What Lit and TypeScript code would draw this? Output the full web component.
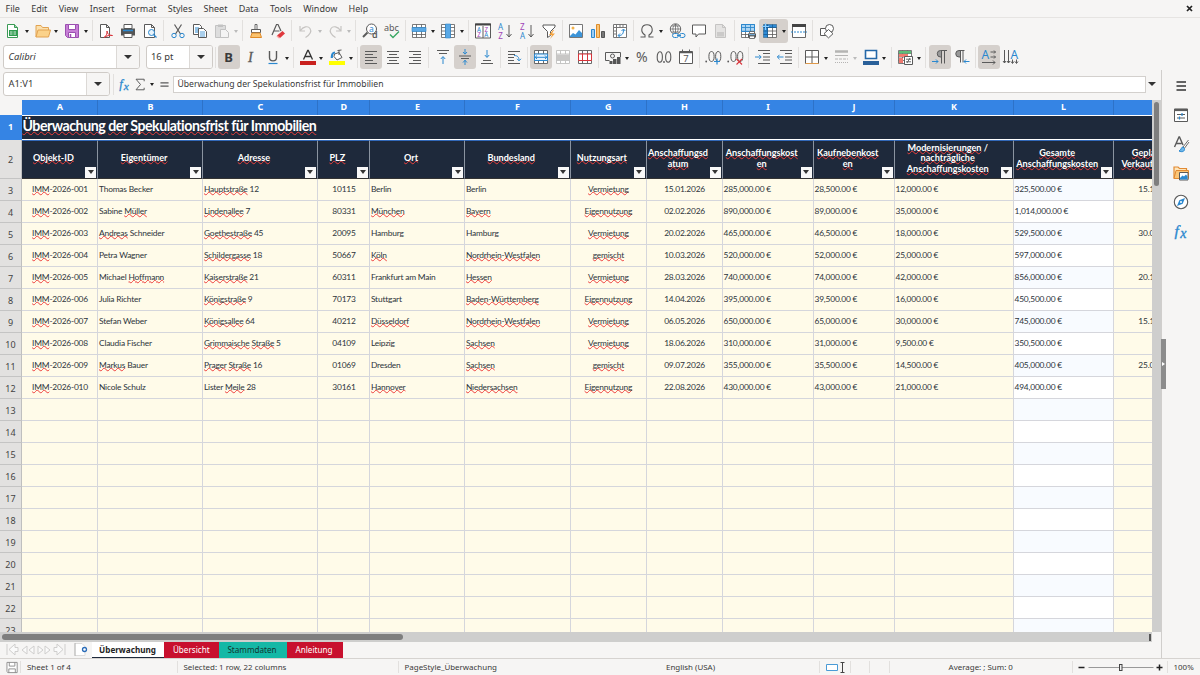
import { LitElement, html, css, svg, nothing } from 'lit';
import { customElement, property } from 'lit/decorators.js';
import { classMap } from 'lit/directives/class-map.js';

// All icons are drawn on a 16x16 grid.
const G = '#5a5a5a';
const B = '#2b88cf';

const lines = (rows: number[][], color = G) =>
  svg`<path d=${rows.map(([x, y, w]) => `M${x} ${y}h${w}`).join('')} stroke=${color} fill="none"/>`;

const letter = (
  x: number,
  y: number,
  text: string,
  color = G,
  size = 8,
  weight = 400,
) =>
  svg`<text x=${x} y=${y} font-size=${size} fill=${color} font-weight=${weight} font-family="Noto Sans, sans-serif">${text}</text>`;

const grid = (color = G) =>
  svg`<path d="M1.5 1.5h13v13h-13zM5.5 1.5v13M10.5 1.5v13M1.5 4.5h13M1.5 8h13M1.5 11.5h13" fill="#fff" stroke=${color} stroke-width=".8"/>`;
const mergeBase = (color: string) =>
  svg`<path d="M1.5 1.5h13v13h-13zM1.5 5h13M1.5 11.5h13M5.5 1.5v3.5M10.5 1.5v3.5M5.5 11.5v3M10.5 11.5v3" fill="#fff" stroke=${color} stroke-width=".9"/>`;
const fx = svg`<g font-style="italic" fill=${B} stroke=${B} stroke-width=".35" font-family="Liberation Serif, serif"><text x="1.5" y="12.5" font-size="15.5">f</text><text x="7.2" y="14.5" font-size="14">x</text></g>`;

const icons: Record<string, unknown> = {
  new: svg`<path d="M2.5 1.5h7l3 3v10h-10z" fill="#fff" stroke="#3a9a55"/><path d="M9.5 1.5v3h3" fill="#9fd8ae" stroke="#3a9a55"/><path d="M4 7h8v6H4z" fill="#2e9b4e"/><path d="M5 9h2.5M8.5 9H11M5 11h2.5M8.5 11H11" stroke="#fff" stroke-width=".8"/>`,
  open: svg`<path d="M1 14V2.5h5l1.5 2h6V7" fill="#fbe0ad" stroke="#e2a250"/><path d="M1 14l2-7h12.5l-2 7z" fill="#fbd28a" stroke="#e2a250"/>`,
  save: svg`<path d="M1.5 1.5h13v13h-11l-2-2z" fill="#c77fd6" stroke="#9b4fb0"/><path d="M4.5 1.5h7v5h-7zM4.5 9.5h7v5h-7z" fill="#fff" stroke="#9b4fb0"/><path d="M6.5 11v3" stroke="#9b4fb0" stroke-width="1.5"/>`,
  pdf: svg`<path d="M2.5 1.5h6l3 3v10h-9zM8.5 1.5v3h3" fill="#fff" stroke=${G}/><path d="M6 14.5c2-1 3.5-4 3-6.5c0 3 2.5 4.5 5.5 4.5c-3-.5-6 .3-8.500 2z" fill="none" stroke="#d9343b"/>`,
  print: svg`<path d="M4 1.5h8v4H4z" fill="#fff" stroke=${G}/><path d="M1 5.5h14v7H1z" fill="#555"/><path d="M3 7.5h10" stroke=${B} stroke-width="1.5"/><path d="M4 10.5h8v4H4z" fill="#fff" stroke=${G}/>`,
  preview: svg`<path d="M2.5 1.5h7l3 3v10h-10zM9.5 1.5v3h3" fill="#fff" stroke=${G}/><circle cx="9.5" cy="9.5" r="3" fill="#e8f3fb" stroke=${B}/><path d="M11.5 11.5l3 3" stroke=${B} stroke-width="1.3"/>`,
  cut: svg`<path d="M4.5 1.5L10.5 11M11.5 1.5L5.5 11" stroke=${G} stroke-width="1.2"/><circle cx="4" cy="12.5" r="2.2" fill="none" stroke=${B}/><circle cx="12" cy="12.5" r="2.2" fill="none" stroke=${B}/>`,
  copy: svg`<path d="M1.5 1.5h6l2 2v8h-8z" fill="#fff" stroke=${G}/><path d="M3 5h4M3 7h3M3 9h3" stroke=${B}/><path d="M6.5 5.5h5l3 3v6h-8z" fill="#fff" stroke=${G}/><path d="M8 9h5M8 11h5M8 13h5" stroke=${B} stroke-width=".8"/>`,
  paste: svg`<path d="M1.5 2.5h10v12h-10z" fill="#ddd" stroke="#c2c2c2"/><path d="M4 1.5h5V4H4z" fill="#c2c2c2"/><path d="M6.5 6.5h5l3 3v5h-8z" fill="#f4f4f4" stroke="#c2c2c2"/>`,
  brush: svg`<path d="M7 1.5h2v5H7z" fill="#fff" stroke=${G} stroke-width=".9"/><path d="M3.5 6.5h9v3h-9z" fill="#fff" stroke=${G}/><path d="M4 10h8l1.5 4.5h-11z" fill="#fbc36f" stroke="#e08a28"/>`,
  clear: svg`<path d="M2 12L6.5 1.5H8L11 8M4 8h5.5" fill="none" stroke=${G} stroke-width="1.2"/><path d="M7 12.5l5.5-4.5 2.5 2.5-5 4.5z" fill="#e0393e"/><path d="M7 12.5l3 2.5-1 .5-2.5-2z" fill="#ff9b9b"/>`,
  undo: svg`<path d="M2 3v5h5M2.5 7.5C5 3.5 10 2.5 12 5.5s0 6-4.5 9" fill="none" stroke="#c6c4c2" stroke-width="1.2"/>`,
  redo: svg`<path d="M14 3v5H9M13.5 7.5C11 3.5 6 2.5 4 5.5s0 6 4.5 9" fill="none" stroke="#c6c4c2" stroke-width="1.2"/>`,
  find: svg`<circle cx="9.5" cy="6" r="5" fill="#fff" stroke=${G}/><path d="M5.5 9.5L1 14" stroke=${G} stroke-width="2"/>${letter(7, 8.5, 'a', B, 8.5)}${letter(10, 15, 'd', G, 9, 600)}`,
  spell: svg`${letter(0, 7.5, 'abc', G, 9)}<path d="M6 11.5l3 3 6-6" fill="none" stroke="#3aa864" stroke-width="1.4"/>`,
  row: svg`${grid()}<path d="M1 4.5h14v4H1z" fill="#5aa9e6" stroke=${B} stroke-width=".6"/>`,
  col: svg`${grid()}<path d="M5.5 1h5v14h-5z" fill="#5aa9e6" stroke=${B} stroke-width=".6"/>`,
  sort: svg`<path d="M.5 1h15v14H.5zM8 3v12" fill="#fff" stroke=${G}/><path d="M0 1.5h16" stroke="#444" stroke-width="2"/>${letter(2, 8.5, 'A', B, 6.2)}${letter(9.5, 8.5, 'Z', '#a144b8', 6.2)}${letter(2.2, 14.3, 'Z', '#a144b8', 6.2)}${letter(9.3, 14.3, 'A', B, 6.2)}`,
  az: svg`${letter(1, 7, 'A', B, 8)}${letter(1.2, 15.5, 'Z', '#a144b8', 8)}<path d="M12 2v12M9.5 11l2.5 3 2.5-3" fill="none" stroke=${G}/>`,
  za: svg`${letter(1, 7, 'Z', '#a144b8', 8)}${letter(1, 15.5, 'A', B, 8)}<path d="M12 2v12M9.5 11l2.5 3 2.5-3" fill="none" stroke=${G}/>`,
  filter: svg`<path d="M2 2h12v2L9.5 8.5v4l-3 2v-6L2 4z" fill="#fff" stroke=${G}/><path d="M12 7l-4 5h3l-2 4 5-5.5h-3l2-3.5z" fill="#f3a13c"/>`,
  image: svg`<path d="M1.5 1.5h13v13h-13z" fill="#fff" stroke="#777"/><circle cx="5" cy="5" r="1.5" fill="#f2b24a"/><path d="M2 13l3-3 2.5 1.5L11 7l3 3v4H2z" fill="#3c94d8"/>`,
  chart: svg`<path d="M1.5 6.5h3v8h-3z" fill="#9ecdf2" stroke=${B}/><path d="M6.5 1.5h3v13h-3z" fill="#fbc577" stroke="#dd8d2b"/><path d="M11.5 8.5h3v6h-3z" fill="#777" stroke="#555"/>`,
  pivot: svg`<path d="M1.5 1.5h13v13h-13zM1.5 4.5h13M4.5 1.5v13M8 1.5v3M11 1.5v3M1.5 8h3M1.5 11h3" fill="#fff" stroke="#777"/><path d="M6.5 12.5c4 0 5-2 5-6M6 12.5l2-2M6 12.5l2 1.8M11.5 6l-2 2M11.5 6l1.8 2" fill="none" stroke=${B}/>`,
  omega: svg`<path d="M1.5 14h4.5v-2C1 9 2 1.8 8 1.8S15 9 10 12v2h4.5" fill="none" stroke=${G} stroke-width="1.1"/>`,
  link: svg`<circle cx="6.5" cy="6" r="5.2" fill="#fff" stroke=${G} stroke-width=".9"/><path d="M1.5 6h10.5M6.5 1v10M2.5 3h8M2.5 9h8M6.5 1c-3.5 3-3.5 7 0 10c3.5-3 3.5-7 0-10" fill="none" stroke=${G} stroke-width=".7"/><rect x="3.5" y="10.5" width="6" height="4" rx="2" fill="#f5f4f2" stroke=${B}/><rect x="10.5" y="10.5" width="5.5" height="4" rx="2" fill="#f5f4f2" stroke=${B}/><path d="M8 12.5h4" stroke=${B}/>`,
  comment: svg`<path d="M1.5 2h13v9H7.5L5 14v-3H1.5z" fill="#fff" stroke=${G}/>`,
  header: svg`<path d="M2.5 1.5h7l3 3v10h-10z" fill="#e4e3e2" stroke="#c5c4c3"/><path d="M4 9h7v4.5H4z" fill="#cbcac9"/><path d="M9.5 1.5v3h3" fill="none" stroke="#c5c4c3"/>`,
  range: svg`${grid()}<path d="M1.5 1.5h13v7h-13z" fill="#8ac4f0" fill-opacity=".7" stroke=${B}/><path d="M1.5 4.5h13M5.5 1.5v7M10.5 1.5v7" stroke=${B} stroke-width=".8"/><path d="M8 10.5h8v4H8z" fill="#555"/><path d="M9.5 8.5h5v2h-5zM9.5 13h5v2.5h-5z" fill="#fff" stroke="#555" stroke-width=".8"/><path d="M9 11.7h6" stroke="#79bdf0"/>`,
  freeze: svg`${grid()}<path d="M1.5 1.5h13v3h-9v10h-4z" fill="#2e8bd6"/><path d="M1.5 4.5h13M1.5 8h4M1.5 11.5h4M5.5 1.5v13M10.5 1.5v3" stroke="#165a94" stroke-width=".8"/><path d="M3.5 0v7M0 3.5h7" stroke="#8fd0ff"/>`,
  split: svg`<path d="M1.5 1.5h13v13h-13z" fill="#fff" stroke="#666"/><path d="M1 2.5h14" stroke="#444" stroke-width="3"/><path d="M0 9h16" stroke=${B} stroke-dasharray="2 1"/>`,
  shapes: svg`<path d="M1.5 5.5h7v7h-7z" fill="#fff" stroke=${G}/><circle cx="10.5" cy="5.5" r="4" fill="#fff" stroke=${G}/><path d="M9.5 6.5l4.5 4.2-4.5 4.2L5 10.7z" fill="#fff" stroke=${G}/>`,
  bold: letter(3.2, 13, 'B', '#3a3a3a', 13, 700),
  italic: svg`<text x="5" y="13" font-size="14.5" font-style="italic" fill=${G} stroke=${G} stroke-width=".3" font-family="Liberation Serif, serif">I</text>`,
  underline: svg`<path d="M4.5 2v6.5c0 4.5 7 4.5 7 0V2" fill="none" stroke=${G} stroke-width="1.4"/><path d="M3.5 14.5h9" stroke=${B} stroke-width="1.2"/>`,
  color: svg`<path d="M3.5 10.5L7.7 1.5h.6L12.5 10.5M5 7.5h6" fill="none" stroke="#333" stroke-width="1.3"/><path d="M0 12h16v4H0z" fill="#c9211e"/>`,
  fill: svg`<path d="M5.5 5l4.5-1.5 3 5-5 2.5-3-3.5z" fill="#fff" stroke=${G}/><path d="M10 1v5M8.5 1.5l4-.5" stroke=${G}/><path d="M6 3.5C2.5 4 3 6 2.8 9" stroke=${B} stroke-width="2.2" fill="none"/><path d="M0 12h16v4H0z" fill="#ff0"/>`,
  left: lines([[2, 2.5, 12], [2, 5.5, 8], [2, 8.5, 12], [2, 11.5, 8], [2, 14.5, 12]]),
  center: lines([[2, 2.5, 12], [4, 5.5, 8], [2, 8.5, 12], [4, 11.5, 8], [2, 14.5, 12]]),
  right: lines([[2, 2.5, 12], [6, 5.5, 8], [2, 8.5, 12], [6, 11.5, 8], [2, 14.5, 12]]),
  top: svg`${lines([[2, 1.5, 12], [4, 4.5, 8]])}<path d="M8 15V8M5.8 10L8 7.5 10.2 10" fill="none" stroke=${B}/>`,
  middle: svg`${lines([[2, 7, 12], [4, 9.5, 8]])}<path d="M8 0v5M6 3l2 2.2L10 3M8 16v-5M6 13.5l2-2.2 2 2.2" fill="none" stroke=${B}/>`,
  bottom: svg`${lines([[4, 11.5, 8], [2, 14.5, 12]])}<path d="M8 1v7M5.8 6L8 8.5 10.2 6" fill="none" stroke=${B}/>`,
  wrap: svg`${lines([[2, 2.5, 12], [2, 5.5, 7], [2, 8.5, 6], [2, 11.5, 6], [2, 14.5, 12]])}<path d="M8 6.5c4 0 5 2 5 5M11 9.8l2 2 2-2" fill="none" stroke=${B}/>`,
  mergeCenter: svg`${mergeBase(G)}<path d="M1.5 5h13v6.5h-13z" fill="#e5f3ff" stroke=${B}/><path d="M2 8.3h12M4 6.5L2.2 8.3 4 10M12 6.5l1.8 1.8L12 10" fill="none" stroke=${B}/>`,
  merge: svg`${mergeBase('#c0bfbe')}<path d="M2 5.5h12v5.5H2z" fill="#c8c7c6"/>`,
  unmerge: svg`${mergeBase(G)}<path d="M1.5 5h13v6.5h-13zM5.5 5v6.5M10.5 5v6.5" fill="#fff" stroke="#d9343b"/>`,
  currency: svg`<path d="M.5 3.5v8h4M.5 3.5h15V8" fill="none" stroke=${G}/><circle cx="7.5" cy="7" r="2" fill="none" stroke=${G}/><path d="M4.5 12h3v3h-3zM8 10h3.5v5H8zM12 8h3.5v7H12z" fill="#555"/>`,
  percent: letter(2, 13, '%', G, 14),
  number: svg`<ellipse cx="3.8" cy="8" rx="2.6" ry="5.2" fill="none" stroke=${G} stroke-width="1.1"/><circle cx="8" cy="13" r=".9" fill=${G}/><ellipse cx="12.2" cy="8" rx="2.6" ry="5.2" fill="none" stroke=${G} stroke-width="1.1"/>`,
  date: svg`<path d="M1.5 2.5h13v12h-13z" fill="#fff" stroke=${G}/><path d="M1.5 3.5h13" stroke=${G} stroke-width="1.5"/><path d="M4.5 .5v3M11.5 .5v3" stroke=${G}/>${letter(5.2, 13, '7', G, 9.5)}`,
  decAdd: svg`<circle cx="1.2" cy="12.5" r=".9" fill=${G}/><path d="M6.5 7.5m-2.6 0a2.6 5 0 1 0 5.2 0a2.6 5 0 1 0-5.2 0M13.2 7.5m-2.6 0a2.6 5 0 1 0 5.2 0a2.6 5 0 1 0-5.2 0" fill="none" stroke=${G}/><path d="M12 9.5v6M9 12.5h6" stroke=${B} stroke-width="1.2"/>`,
  decDel: svg`<circle cx="1.2" cy="12.5" r=".9" fill=${G}/><path d="M6.5 7.5m-2.6 0a2.6 5 0 1 0 5.2 0a2.6 5 0 1 0-5.2 0M13.2 7.5m-2.6 0a2.6 5 0 1 0 5.2 0a2.6 5 0 1 0-5.2 0" fill="none" stroke=${G}/><path d="M9.5 10l5.5 5.5M15 10l-5.5 5.5" stroke="#d9343b" stroke-width="1.1"/>`,
  indent: svg`${lines([[3, 1.5, 12], [8, 4.5, 7], [8, 8, 7], [8, 11, 7], [3, 14.5, 12]])}<path d="M0 8h6M4 5.8L6.2 8 4 10.2" fill="none" stroke=${B}/>`,
  outdent: svg`${lines([[3, 1.5, 12], [8, 4.5, 7], [8, 8, 7], [8, 11, 7], [3, 14.5, 12]])}<path d="M.5 8h6M2.5 5.8L.3 8l2.2 2.2" fill="none" stroke=${B}/>`,
  border: svg`<path d="M1.5 1.5h13v13h-13zM8 1.5v13M1.5 8h13" fill="#fff" stroke=${G}/><path d="M1.5 14.5h13" stroke="#e09a4a"/>`,
  style: svg`<path d="M2 2.5h13" stroke="#b5b4b3" stroke-width="2.5"/><path d="M2 6.5h13" stroke="#b5b4b3"/><path d="M2 10h13" stroke="#b5b4b3" stroke-dasharray="3 1"/><path d="M2 13.5h13" stroke="#b5b4b3" stroke-dasharray="1 1"/>`,
  borderColor: svg`<path d="M2.5 1.5h11v8h-11z" fill="#fff" stroke="#2568a8" stroke-width="1.6"/><path d="M0 12h16v4H0z" fill="#2a6099"/>`,
  cond: svg`${grid()}<path d="M2 2h12v2.5H2z" fill="#5cbf78"/><path d="M2 5h9v3H2zM2 9h4v5H2z" fill="#ef7a70"/><path d="M7.5 7.5h8v8h-8z" fill="#fff" stroke=${G}/><path d="M9 10.2h5M9 12.8h5M13 9l-3 5" stroke=${G} stroke-width=".9"/>`,
  ltr: svg`<path d="M9.5 1.5H8.5a3 3 0 0 0 0 6.5h1z" fill="#999"/><path d="M15 1.5H8.5a3 3 0 0 0 0 6.5H9M9.5 1.5v13M12.5 1.5v13" fill="none" stroke=${G}/><path d="M0 12.5h6M4 10.5l2 2-2 2" fill="none" stroke=${B}/>`,
  rtl: svg`<path d="M6.5 1.5H5a3 3 0 0 0 0 6.5h1.5z" fill="#999"/><path d="M10.5 1.5H5a3 3 0 0 0 0 6.5h1M6.5 1.5v12M9 1.5v12" fill="none" stroke=${G}/><path d="M15.5 12.5H10M12 10.5l-2 2 2 2" fill="none" stroke=${B}/>`,
  horizontal: svg`${letter(0.5, 10, 'A', B, 12)}<path d="M9.5 3h5M13 1.5L14.5 3 13 4.5M9.5 8h5M13 6.5L14.5 8 13 9.5M1 13.5h13M12 11.5l2 2-2 2" fill="none" stroke=${G}/>`,
  vertical: svg`${letter(7.5, 10, 'A', B, 12)}<path d="M1.5 1v13M0 12l1.5 2L3 12M5.5 1v13M4 12l1.5 2L7 12M9.5 10.5V14M8 12.5L9.5 14.5 11 12.5M13.5 10.5V14M12 12.5l1.5 2 1.5-2" fill="none" stroke=${G}/>`,
  fx,
  sigma: svg`<path d="M12.5 4V1.5h-10L8 8l-5.5 6.5h10V12" fill="none" stroke=${G} stroke-width="1.2"/>`,
  equals: svg`<path d="M3 6h10M3 10h10" stroke=${G} stroke-width="1.6"/>`,
  menu: svg`<path d="M3.5 4h9.5M3.5 8h9.5M3.5 12h9.5" stroke="#333" stroke-width="1.4"/>`,
  properties: svg`<path d="M1.5 2h13v12.5h-13z" fill="#fff" stroke=${G}/><path d="M1 3h14" stroke=${G} stroke-width="2.2"/><path d="M4 7.5h8M4 11h8" stroke=${G}/><path d="M9 6v3M6.5 9.5v3" stroke=${B} stroke-width="1.2"/>`,
  styles: svg`<path d="M1.5 11L6 1h.5L10 9M3 7.5h5.5" fill="none" stroke=${G} stroke-width="1.4"/><path d="M15.5 4L10 11l1.5 1.2L16 6" fill="#fff" stroke=${G} stroke-width=".9"/><path d="M10 11c-2 0-1.5 3-4 4 3 1.5 6 .5 5.5-2.5z" fill="#6db7ea" stroke=${B}/>`,
  gallery: svg`<path d="M1 13.5V2h4l1.5 1.5h7V6H4z" fill="#fde5bb" stroke="#e28a32" stroke-width="1.2"/><path d="M1 13.5L3 5.5h12.5v8z" fill="#fbc577" stroke="#e28a32"/><path d="M6.5 7.5h8.5v7.5H6.5z" fill="#fff" stroke=${G}/><path d="M7 13l2.5-2.5 1.5 1L13 9.5l1.5 2v3H7z" fill=${B}/>`,
  navigator: svg`<circle cx="8" cy="8" r="6.7" fill="#fff" stroke=${G} stroke-width="1.1"/><path d="M12 4l-2.3 5.7L4 12l2.3-5.7z" fill=${B}/><circle cx="8" cy="8" r="1" fill="#fff"/>`,
  diskSmall: svg`<path d="M2.5 2.5h11v11h-10l-1-1z" fill="#fff" stroke="#8c8c8c"/><path d="M5 2.5v4h6v-4M4.5 13.5v-4h7v4" fill="none" stroke="#8c8c8c"/>`,
};

const icon = (name: string) =>
  html`<svg class="icon" viewBox="0 0 16 16">${icons[name]}</svg>`;

// '|' separates groups, 'v' adds a dropdown, '!' marks a pressed button,
// '-' a disabled dropdown
const STANDARD =
  'new:v open:v save:v | pdf print preview | cut copy paste:- | brush clear | undo:- redo:- | find spell | row:v col:v | sort az za filter | image chart pivot | omega:v link comment header | range freeze:v! split | shapes';
const FORMATTING =
  'bold:! italic underline:v | color:v fill:v | left:! center right | top middle:! bottom | wrap | mergeCenter:! merge unmerge | currency:v percent number date | decAdd decDel | indent outdent | border:v style:- borderColor:v | cond:v | ltr:! rtl | horizontal:! vertical';

const MENU = ['File', 'Edit', 'View', 'Insert', 'Format', 'Styles', 'Sheet', 'Data', 'Tools', 'Window', 'Help'];
const COLUMNS = ['A', 'B', 'C', 'D', 'E', 'F', 'G', 'H', 'I', 'J', 'K', 'L', ''];

// Words between underscores are flagged by the spell checker.
const HEADERS = [
  ['_Objekt-ID_'],
  ['_Eigentümer_'],
  ['_Adresse_'],
  ['_PLZ_'],
  ['_Ort_'],
  ['_Bundesland_'],
  ['_Nutzungsart_'],
  ['_Anschaffungsd_', '_atum_'],
  ['_Anschaffungskost_', '_en_'],
  ['_Kaufnebenkost_', '_en_'],
  ['_Modernisierungen_ /', '_nachträgliche_', '_Anschaffungskosten_'],
  ['_Gesamte_', '_Anschaffungskosten_'],
  ['_Geplantes_', '_Verkaufsdatum_'],
];

const ROWS = [
  ['Thomas Becker', '_Hauptstraße_ 12', '10115', 'Berlin', 'Berlin', '_Vermietung_', '15.01.2026', '285,000.00 €', '28,500.00 €', '12,000.00 €', '325,500.00 €', '15.12.2026'],
  ['Sabine _Müller_', '_Lindenallee_ 7', '80331', '_München_', '_Bayern_', '_Eigennutzung_', '02.02.2026', '890,000.00 €', '89,000.00 €', '35,000.00 €', '1,014,000.00 €', ''],
  ['_Andreas_ Schneider', '_Goethestraße_ 45', '20095', 'Hamburg', 'Hamburg', '_Vermietung_', '20.02.2026', '465,000.00 €', '46,500.00 €', '18,000.00 €', '529,500.00 €', '30.06.2027'],
  ['Petra Wagner', '_Schildergasse_ 18', '50667', '_Köln_', '_Nordrhein-Westfalen_', '_gemischt_', '10.03.2026', '520,000.00 €', '52,000.00 €', '25,000.00 €', '597,000.00 €', ''],
  ['Michael _Hoffmann_', '_Kaiserstraße_ 21', '60311', 'Frankfurt am Main', '_Hessen_', '_Vermietung_', '28.03.2026', '740,000.00 €', '74,000.00 €', '42,000.00 €', '856,000.00 €', '20.11.2027'],
  ['Julia Richter', '_Königstraße_ 9', '70173', 'Stuttgart', '_Baden-Württemberg_', '_Eigennutzung_', '14.04.2026', '395,000.00 €', '39,500.00 €', '16,000.00 €', '450,500.00 €', ''],
  ['Stefan Weber', '_Königsallee_ 64', '40212', '_Düsseldorf_', '_Nordrhein-Westfalen_', '_Vermietung_', '06.05.2026', '650,000.00 €', '65,000.00 €', '30,000.00 €', '745,000.00 €', '15.10.2028'],
  ['Claudia Fischer', '_Grimmaische_ _Straße_ 5', '04109', 'Leipzig', '_Sachsen_', '_Vermietung_', '18.06.2026', '310,000.00 €', '31,000.00 €', '9,500.00 €', '350,500.00 €', ''],
  ['_Markus_ Bauer', '_Prager_ _Straße_ 16', '01069', 'Dresden', '_Sachsen_', '_gemischt_', '09.07.2026', '355,000.00 €', '35,500.00 €', '14,500.00 €', '405,000.00 €', '25.09.2028'],
  ['Nicole Schulz', 'Lister _Meile_ 28', '30161', '_Hannover_', '_Niedersachsen_', '_Eigennutzung_', '22.08.2026', '430,000.00 €', '43,000.00 €', '21,000.00 €', '494,000.00 €', ''],
];

const CENTERED = new Set([0, 3, 6, 7, 12]);

const marked = (text: string) =>
  text
    .split('_')
    .map((part, i) => (i % 2 ? html`<span class="typo">${part}</span>` : part));

@customElement('tool-bar')
export class ToolBar extends LitElement {
  @property() items = '';

  static styles = css`
    :host {
      display: flex;
      align-items: center;
      height: 26px;
    }
    .button {
      display: flex;
      align-items: center;
      height: 24px;
      border-radius: 3px;
    }
    .button.pressed {
      background: #d5d0cc;
    }
    .glyph {
      width: 22px;
      display: flex;
      justify-content: center;
    }
    .icon {
      width: 16px;
      height: 16px;
      overflow: visible;
    }
    .arrow {
      width: 7.25px;
      display: flex;
    }
    .arrow::after {
      content: '';
      margin: 2px 0 0 0.8px;
      border: 2.5px solid transparent;
      border-top: 3px solid #222;
      border-bottom: 0;
    }
    .arrow.off::after {
      border-top-color: #bbb;
    }
    .sep {
      width: 1px;
      height: 21px;
      margin: 0 2.35px 0 2px;
      background: #e2e0de;
    }
  `;

  render() {
    return this.items.split(' ').map((item) => {
      if (item === '|') {
        return html`<div class="sep"></div>`;
      }
      const [name, flags = ''] = item.split(':');
      return html`
        <div class=${classMap({ button: true, pressed: flags.includes('!') })}>
          <div class="glyph">${icon(name)}</div>
          ${/[v-]/.test(flags)
            ? html`<div
                class=${classMap({ arrow: true, off: flags.includes('-') })}
              ></div>`
            : nothing}
        </div>
      `;
    });
  }
}

@customElement('sheet-grid')
export class SheetGrid extends LitElement {
  static styles = css`
    :host {
      display: block;
      height: 532px;
      overflow: hidden;
      font-family: Lato, 'Liberation Sans', sans-serif;
      font-size: 8.4px;
      letter-spacing: -0.2px;
      color: #2c333b;
    }
    .typo {
      text-decoration: underline wavy #ee3f3c;
      text-decoration-thickness: 0.6px;
      text-underline-offset: -0.5px;
      text-decoration-skip-ink: none;
    }
    .row {
      display: grid;
      grid-template-columns:
        22px 76.4px 105px 114.6px 52.4px 95px 105.2px 76px
        76.4px 91px 81px 119px 100px 90px;
      height: 22.05px;
    }
    .row > div {
      box-sizing: border-box;
      overflow: hidden;
      white-space: nowrap;
    }
    .num {
      display: flex;
      align-items: center;
      justify-content: center;
      padding-top: 2px;
      background: #e2e1e0;
      border-right: 1px solid #bfbfbf;
      border-bottom: 1px solid #c4c4c4;
      font-family: 'Noto Sans', sans-serif;
      font-size: 9px;
      letter-spacing: 0;
      color: #444;
    }
    .cell {
      display: flex;
      align-items: center;
      padding: 0 0 0 0.6px;
      background: #fffbe9;
      border-right: 1px solid #d5d6dc;
      border-bottom: 1px solid #d5d6dc;
    }
    .center {
      justify-content: center;
    }
    .total {
      background: #fff;
    }
    .odd .total {
      background: #f8fbff;
    }
    .letters {
      height: 14.5px;
    }
    .letters .letter {
      background: #3584e4;
      border-right: 1px solid #2d72c8;
      color: #fff;
      font: 700 9px/14px 'Noto Sans', sans-serif;
      text-align: center;
    }
    .title {
      height: 25px;
      grid-template-columns: 22px 1fr;
    }
    .title .num {
      padding-top: 0;
      background: #3584e4;
      color: #fff;
      font-weight: 700;
      border-color: #3584e4;
    }
    .title .text {
      border-top: 1px solid #fff;
      border-bottom: 1.5px solid #fff;
      background: #1e293b;
      color: #fff;
      font-size: 14.2px;
      letter-spacing: -0.49px;
      line-height: 20px;
      font-weight: 700;
      padding-left: 0.4px;
    }
    .title .typo {
      text-underline-offset: 0.4px;
      text-decoration-thickness: 0.8px;
    }
    .head {
      height: 39px;
    }
    .head .label {
      display: flex;
      align-items: center;
      background: #1e293b;
      color: #fff;
      border-top: 1.5px solid #3268b8;
      border-right: 1px solid #8a93a0;
      border-bottom: 1.5px solid #333;
      font-weight: 700;
      font-size: 9.1px;
      letter-spacing: 0;
      line-height: 10.4px;
      text-align: center;
    }
    .head .words {
      flex: 1;
      margin-left: -8px;
      margin-right: -7.5px;
      padding-bottom: 1px;
    }
    .drop {
      width: 11px;
      height: 11px;
      margin-right: 1px;
      align-self: flex-end;
      flex: none;
      display: flex;
      align-items: center;
      justify-content: center;
      background: #f8f8f8;
    }
    .drop::after {
      content: '';
      border: 3px solid transparent;
      border-top: 4px solid #333;
      border-bottom: 0;
    }
  `;

  render() {
    const rows = Array.from({ length: 21 }, (_, i) => i);
    return html`
      <div class="row letters">
        <div></div>
        ${COLUMNS.map((c) => html`<div class="letter">${c}</div>`)}
      </div>
      <div class="row title">
        <div class="num">1</div>
        <div class="text">
          ${marked('_Überwachung_ _der_ _Spekulationsfrist_ _für_ _Immobilien_')}
        </div>
      </div>
      <div class="row head">
        <div class="num">2</div>
        ${HEADERS.map(
          (label) => html`
            <div class="label">
              <div class="words">
                ${label.map((line) => html`<div>${marked(line)}</div>`)}
              </div>
              <div class="drop"></div>
            </div>
          `,
        )}
      </div>
      ${rows.map((i) => this.renderRow(i))}
    `;
  }

  renderRow(i: number) {
    const id = `_IMM_-2026-${String(i + 1).padStart(3, '0')}`;
    const values = ROWS[i] ? [id, ...ROWS[i]] : Array(13).fill('');
    return html`
      <div class=${classMap({ row: true, odd: i % 2 === 0 })}>
        <div class="num">${i + 3}</div>
        ${values.map(
          (value, c) => html`
            <div
              class=${classMap({
                cell: true,
                center: CENTERED.has(c),
                total: c === 11,
              })}
            >
              <div>${marked(value)}</div>
            </div>
          `,
        )}
      </div>
    `;
  }
}

@customElement('app-root')
export class AppRoot extends LitElement {
  static styles = css`
    :host {
      display: flex;
      flex-direction: column;
      width: 1200px;
      height: 675px;
      overflow: hidden;
      background: #f6f5f4;
      color: #3a3a3a;
      font-family: 'Noto Sans', sans-serif;
      font-size: 9px;
    }
    .icon {
      width: 16px;
      height: 16px;
      overflow: visible;
    }
    .menu {
      display: flex;
      gap: 11.3px;
      align-items: center;
      height: 17px;
      padding: 0 7px 0 5.5px;
      border-bottom: 1px solid #e6e4e2;
    }
    .close {
      margin-left: auto;
      width: 7px;
      height: 7px;
    }
    .standard {
      padding-left: 2.4px;
      height: 25px;
      padding-bottom: 1px;
    }
    .formatting {
      display: flex;
      align-items: center;
      height: 26px;
      padding-left: 3px;
    }
    .combo {
      display: flex;
      box-sizing: border-box;
      height: 24px;
      border: 1px solid #cfcbc7;
      border-radius: 3px;
      background: #fff;
      overflow: hidden;
    }
    .combo span {
      flex: 1;
      line-height: 21px;
      padding-left: 4.5px;
      font-size: 9.4px;
    }
    .combo i {
      width: 22px;
      background: #f6f5f4;
      border-left: 1px solid #dcd9d6;
      display: flex;
      align-items: center;
      justify-content: center;
    }
    .combo i::after,
    .expand {
      content: '';
      border: 4px solid transparent;
      border-top: 4.5px solid #333;
      border-bottom: 0;
    }
    .font {
      width: 137px;
      margin-right: 5.5px;
      font-style: italic;
    }
    .size {
      width: 67.5px;
      margin-right: 2px;
    }
    .sep {
      width: 1px;
      height: 21px;
      background: #e2e0de;
      margin-right: 2px;
    }
    .body {
      display: flex;
      flex: 1;
      min-height: 0;
    }
    .main {
      width: 1161px;
      display: flex;
      flex-direction: column;
    }
    .formula {
      display: flex;
      align-items: center;
      height: 30px;
      box-sizing: border-box;
      padding: 0 0 2px 3px;
    }
    .name {
      width: 107px;
      margin-right: 3px;
    }
    .formula .small {
      width: 13px;
      height: 13px;
      margin: 0 1.5px;
    }
    .tiny {
      border: 2.5px solid transparent;
      border-top: 3px solid #222;
      border-bottom: 0;
      margin: 0 3px 0 1.5px;
    }
    .input {
      width: 972.5px;
      box-sizing: border-box;
      height: 17px;
      background: #fff;
      border: 1px solid #d3d0cd;
      padding-left: 3.5px;
      line-height: 15px;
      font-size: 8.65px;
      margin-left: 0.5px;
    }
    .expand {
      margin-left: 2px;
    }
    .sheet {
      display: flex;
    }
    sheet-grid {
      width: 1152px;
    }
    .vscroll {
      width: 9px;
      background: #cececd;
    }
    .vscroll div {
      width: 5.5px;
      height: 84px;
      margin: 2px 0 0 1.5px;
      border-radius: 3px;
      background: #7e7e7e;
    }
    .hscroll {
      display: flex;
      align-items: center;
      justify-content: space-between;
      width: 1152px;
      height: 10px;
      background: #cececd;
    }
    .hscroll div {
      width: 401px;
      height: 6px;
      margin-left: 2px;
      border-radius: 3px;
      background: #7e7e7e;
    }
    .hscroll b {
      width: 2px;
      height: 7px;
      margin-right: 1px;
      background: #555;
    }
    .tabs {
      display: flex;
      height: 15.5px;
      font-size: 8.15px;
      line-height: 15px;
      text-align: center;
    }
    .nav {
      width: 75px;
      padding-right: 17px;
      height: 15px;
    }
    .add {
      width: 10px;
      height: 13px;
      margin: 1px 7px 0 -17px;
      overflow: visible;
    }
    .tab {
      box-sizing: border-box;
      background: #c8102e;
      color: #fff;
    }
    .tab.active {
      width: 72px;
      background: #fff;
      color: #222;
      font-weight: 700;
      font-size: 8.15px;
      padding-right: 1px;
      border-bottom: 1.5px solid #1e293b;
    }
    .tab.red {
      width: 54.5px;
    }
    .tab.red:last-child {
      width: 56px;
      padding-right: 1px;
    }
    .tab.teal {
      width: 68px;
      padding-right: 1px;
      background: #14b8a6;
      color: #12352f;
    }
    .side {
      flex: 1;
      display: flex;
      border-left: 1px solid #d0cecc;
    }
    .handle {
      align-self: flex-start;
      width: 4.5px;
      height: 50px;
      margin-top: 269px;
      margin-left: -1px;
      background: #8c8c8c;
      display: flex;
      align-items: center;
    }
    .handle::after {
      content: '';
      border: 2px solid transparent;
      border-left: 3px solid #fff;
      border-right: 0;
      margin-left: 0.5px;
    }
    .deck {
      display: flex;
      flex-direction: column;
      gap: 13.1px;
      padding: 7.5px 0 0 7.5px;
    }
    .status {
      display: grid;
      grid-template-columns: 21px 156.5px 221px 267.5px 139.5px 14px 31px 19.5px 20px 182.5px 95px 1fr;
      align-items: center;
      height: 17px;
      box-sizing: border-box;
      border-top: 1px solid #d6d3d0;
      font-size: 7.95px;
    }
    .status > div {
      height: 12px;
      line-height: 12px;
      border-right: 1px solid #e2e0de;
      box-sizing: border-box;
      white-space: nowrap;
    }
    .status .mid {
      text-align: center;
    }
    .status > div:last-child,
    .status .bare {
      border: 0;
    }
    .status .pad {
      padding-left: 6px;
    }
    .status svg {
      display: block;
      overflow: visible;
    }
  `;

  render() {
    return html`
      <div class="menu">
        ${MENU.map((item) => html`<span>${item}</span>`)}
        <svg class="close" viewBox="0 0 7 7">
          <path d="M1 1l5 5M6 1L1 6" stroke="#222" stroke-width="1.7" />
        </svg>
      </div>
      <tool-bar class="standard" .items=${STANDARD}></tool-bar>
      <div class="formatting">
        <div class="combo font"><span>Calibri</span><i></i></div>
        <div class="combo size"><span>16 pt</span><i></i></div>
        <div class="sep"></div>
        <tool-bar .items=${FORMATTING}></tool-bar>
      </div>
      <div class="body">
        <div class="main">
          <div class="formula">
            <div class="combo name"><span>A1:V1</span><i></i></div>
            <div class="sep"></div>
            <svg class="icon small" viewBox="0 0 16 16">${icons.fx}</svg>
            <svg class="icon small" viewBox="0 0 16 16">${icons.sigma}</svg>
            <div class="tiny"></div>
            <svg class="icon small" viewBox="0 0 16 16">${icons.equals}</svg>
            <div class="input">Überwachung der Spekulationsfrist für Immobilien</div>
            <div class="expand"></div>
          </div>
          <div class="sheet">
            <sheet-grid></sheet-grid>
            <div class="vscroll"><div></div></div>
          </div>
          <div class="hscroll"><div></div><b></b></div>
          ${this.renderTabs()}
        </div>
        <div class="side">
          <div class="handle"></div>
          <div class="deck">
            ${['menu', 'properties', 'styles', 'gallery', 'navigator', 'fx'].map(icon)}
          </div>
        </div>
      </div>
      ${this.renderStatus()}
    `;
  }

  renderTabs() {
    return html`
      <div class="tabs">
        <svg class="nav" viewBox="0 0 75 15">
          <path
            d="M7 2v11M15 2l-6 5.5 6 5.5v-3.5h3v-4h-3zM27 4l-5 4 5 4zM34 4l-5 4 5 4zM38 4l5 4-5 4zM45 4l5 4-5 4zM57 2l6 5.5-6 5.5v-3.5h-3v-4h3zM65 2v11"
            fill="#fafafa"
            stroke="#cfcecd"
          />
        </svg>
        <svg class="add" viewBox="0 0 10 13">
          <path d="M0 .5h7l3 3v9H0z" fill="#fff" stroke="#d5d4d3" stroke-width=".8" />
          <path d="M0 0v13" stroke="#aaa" stroke-width=".8" />
          <circle cx="9.5" cy="6.5" r="2" fill="#fff" stroke="#2a6cb8" stroke-width="1.3" />
        </svg>
        <div class="tab active">Überwachung</div>
        <div class="tab red">Übersicht</div>
        <div class="tab teal">Stammdaten</div>
        <div class="tab red">Anleitung</div>
      </div>
    `;
  }

  renderStatus() {
    // The slider knob sits in the middle of the track at 100%.
    const zoom = 100;
    return html`
      <div class="status">
        <div>
          <svg width="13" height="13" viewBox="-5 1 14 14">${icons.diskSmall}</svg>
        </div>
        <div class="pad">Sheet 1 of 4</div>
        <div class="pad">Selected: 1 row, 22 columns</div>
        <div class="pad bare">PageStyle_Überwachung</div>
        <div class="bare">English (USA)</div>
        <div></div>
        <div>
          <svg width="30" height="12" viewBox="0 0 30 12">
            <path d="M6.5 3.5h11v6h-11z" fill="#fff" stroke="#4a9bd6" />
            <path d="M20.5 1.5h4M22.5 1.5v10M20.5 11.5h4" fill="none" stroke="#444" />
          </svg>
        </div>
        <div></div>
        <div></div>
        <div class="mid">Average: ; Sum: 0</div>
        <div>
          <svg width="95" height="12" viewBox="0 0 95 12">
            <path d="M5.5 6.5h6M83.5 6.5h6M86.5 3.5v6" stroke="#222" stroke-width="1.5" />
            <path d="M15.5 6.5h65" stroke="#999" />
            <rect
              x=${15.5 + (65 * zoom) / 200 - 1.5}
              y="3.5"
              width="2.5"
              height="6"
              fill="#eee"
              stroke="#444"
            />
          </svg>
        </div>
        <div class="pad">${zoom}%</div>
      </div>
    `;
  }
}
